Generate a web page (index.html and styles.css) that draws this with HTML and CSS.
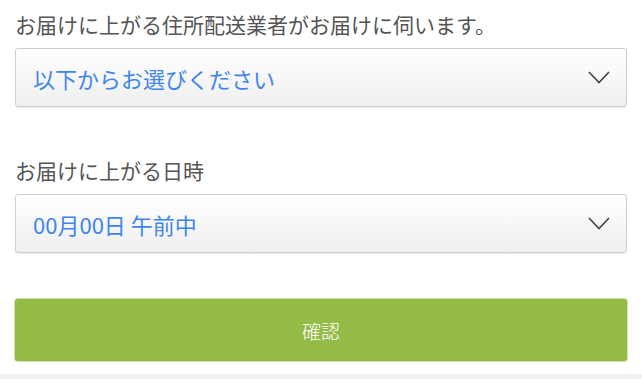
FILE: index.html
```html
<!DOCTYPE html>
<html lang="ja">
<head>
  <meta charset="UTF-8" />
  <meta name="viewport" content="width=device-width, initial-scale=1.0">
  <title>お届け設定</title>
  <link rel="stylesheet" href="styles.css">
</head>
<body>

<div class="form">

  <!-- 配送業者 -->
  <div class="field">
    <div class="label">お届けに上がる住所配送業者がお届けに伺います。</div>
    <div class="select">
      <span class="value">以下からお選びください</span>
      <svg class="chevron" width="22" height="13" viewBox="0 0 22 13">
        <polyline points="1,1 11,11.5 21,1" fill="none" stroke="#444" stroke-width="1.6"/>
      </svg>
    </div>
  </div>

  <!-- 日時 -->
  <div class="field second">
    <div class="label">お届けに上がる日時</div>
    <div class="select">
      <span class="value">00月00日 午前中</span>
      <svg class="chevron" width="22" height="13" viewBox="0 0 22 13">
        <polyline points="1,1 11,11.5 21,1" fill="none" stroke="#444" stroke-width="1.6"/>
      </svg>
    </div>
  </div>

  <button class="confirm-btn">確認</button>

</div>

<div class="footer-strip"></div>

</body>
</html>
```

FILE: styles.css
```css
/* ----------  BASE  ---------- */
*{box-sizing:border-box}

body{
  margin:0;
  font-family:"Noto Sans CJK JP","Noto Sans",sans-serif;
  background:#fff;
  color:#555;
}

.form{
  padding:10px 15px 0;
}

/* ----------  FIELDS  ---------- */
.field.second{margin-top:49px;}

.label{
  font-size:21px;
  line-height:28px;
  color:#555;
}

.select{
  margin-top:10px;
  height:59px;
  display:flex; align-items:center; justify-content:space-between;
  padding:0 16px 0 17px;
  border:1px solid #cfcfcf;
  border-radius:3px;
  background:linear-gradient(#fff,#efefef);
  box-shadow:0 1px 1px rgba(0,0,0,.08);
}
.select .value{
  font-size:22px;
  color:#3d86ee;
  line-height:1;
}
.chevron{flex:none;}

/* ----------  BUTTON  ---------- */
.confirm-btn{
  display:block;
  width:100%;
  height:62px;
  margin-top:46px;
  border:none;
  border-radius:3px;
  background:#94bb45;
  box-shadow:0 0 0 1px #cfe0ad;
  color:#fff;
  font-family:inherit;
  font-size:19px;
  font-weight:300;
  cursor:pointer;
}

/* ----------  BOTTOM STRIP  ---------- */
.footer-strip{
  margin-top:13px;
  height:10px;
  background:#f1f1f1;
}
```
